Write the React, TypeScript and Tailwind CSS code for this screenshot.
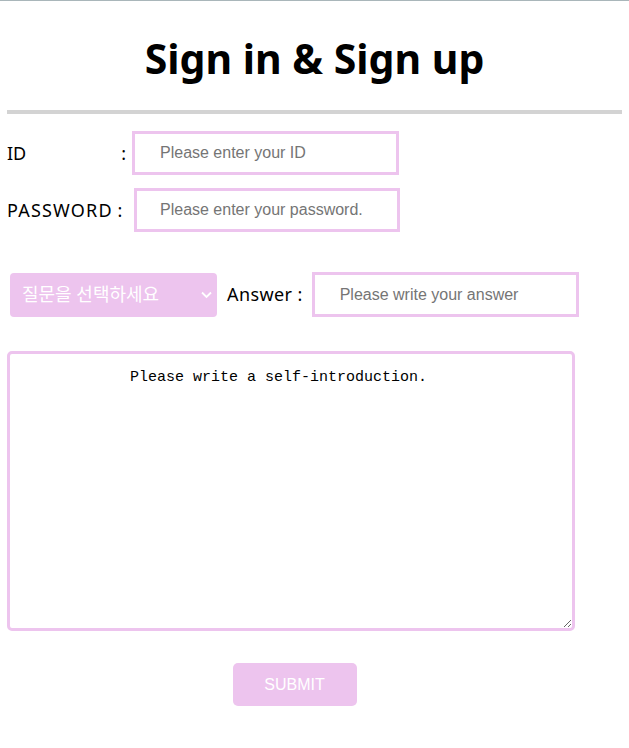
import React from "react";

const pink = "border-[#edc4ee]";

export default function App() {
  return (
    <div className="w-[629px] h-[748px] bg-white overflow-hidden" style={{ fontFamily: '"Noto Sans", "Noto Sans CJK KR", sans-serif' }}>
      <div className="h-px bg-[#a9b6ba]" />
      <h1 className="text-center text-[41px] font-bold leading-none pt-[37px] text-black">
        Sign in &amp; Sign up
      </h1>
      <div className="mx-[7px] mt-[31px] h-[4px] bg-[#d3d3d3]" />

      <div className="flex items-center mt-[17px] pl-[7px]">
        <div className="w-[125px] flex justify-between pr-[6px] text-[18px] text-black">
          <span>ID</span>
          <span>:</span>
        </div>
        <input
          className={`w-[267px] h-[44px] border-[3px] ${pink} pl-[25px] text-[16px] outline-none placeholder:text-[#757575]`}
          style={{ fontFamily: '"Liberation Sans", Arial, sans-serif' }}
          placeholder="Please enter your ID"
        />
      </div>

      <div className="flex items-center mt-[13px] pl-[7px]">
        <div className="w-[127px] text-[18px] text-black whitespace-pre">
          <span className="tracking-[1.2px]">PASSWORD</span> :
        </div>
        <input
          type="password"
          className={`w-[266px] h-[44px] border-[3px] ${pink} pl-[23px] text-[16px] outline-none placeholder:text-[#757575]`}
          style={{ fontFamily: '"Liberation Sans", Arial, sans-serif' }}
          placeholder="Please enter your password."
        />
      </div>

      <div className="flex items-center mt-[40px] pl-[10px]">
        <div className="relative w-[207px] h-[44px] rounded-[4px] bg-[#edc4ee]">
          <select
            className="appearance-none w-full h-full bg-transparent text-white text-[18px] pl-[12px] outline-none"
            defaultValue=""
          >
            <option value="">질문을 선택하세요</option>
          </select>
          <svg
            className="absolute right-[5px] top-[18px] pointer-events-none"
            width="11"
            height="8"
            viewBox="0 0 11 8"
            fill="none"
          >
            <path d="M1 1.5 L5.5 6 L10 1.5" stroke="white" strokeWidth="1.8" />
          </svg>
        </div>
        <span className="ml-[10px] text-[18px] text-black tracking-[0.4px]">Answer :</span>
        <input
          className={`ml-[9px] w-[267px] h-[45px] border-[3px] ${pink} pl-[25px] text-[16px] outline-none placeholder:text-[#757575]`}
          style={{ fontFamily: '"Liberation Sans", Arial, sans-serif' }}
          placeholder="Please write your answer"
        />
      </div>

      <div className="pl-[7px] mt-[34px]">
        <textarea
          className={`block w-[568px] h-[280px] border-[3px] ${pink} rounded-[5px] pl-[120px] pt-[13px] text-[15px] text-black outline-none placeholder:text-black`}
          style={{ fontFamily: '"Liberation Mono", "DejaVu Sans Mono", monospace' }}
          placeholder="Please write a self-introduction."
        />
      </div>

      <div className="flex justify-center mt-[32px] pr-[40px]">
        <button
          className="w-[124px] h-[43px] rounded-[5px] bg-[#edc4ee] text-white text-[16px]"
          style={{ fontFamily: '"Liberation Sans", Arial, sans-serif' }}
        >
          SUBMIT
        </button>
      </div>
    </div>
  );
}
